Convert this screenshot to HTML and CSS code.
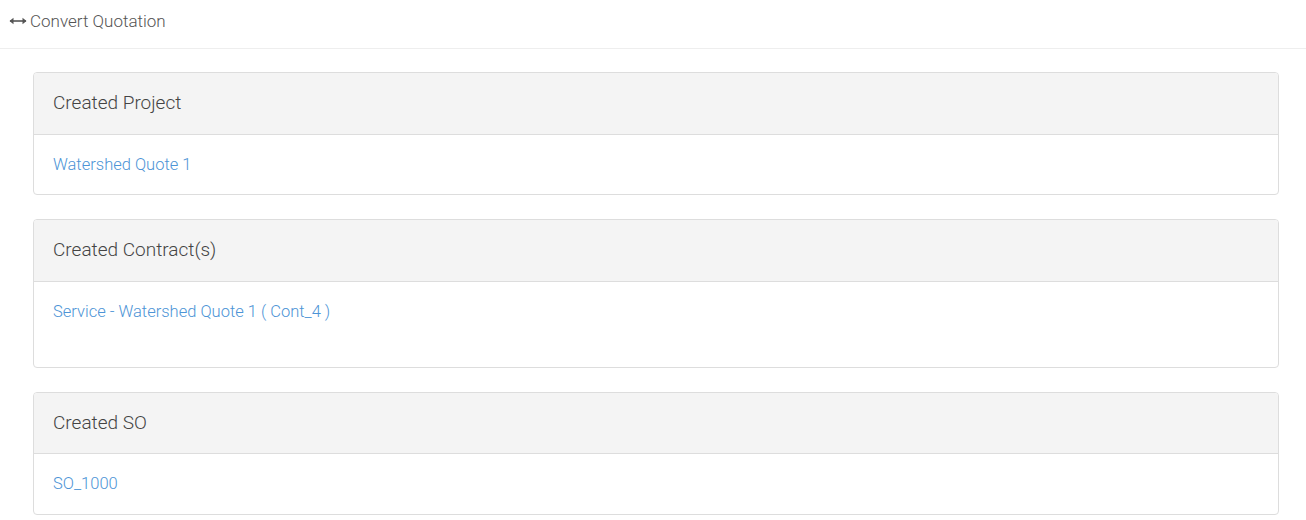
FILE: index.html
```html
<!DOCTYPE html>
<html>
<head>
<meta charset="utf-8">
<link rel="stylesheet" href="styles.css">
</head>
<body>
<div class="topbar">
  <svg class="arrow" width="18" height="8" viewBox="0 0 18 8"><path d="M1 4H17" stroke="#555" stroke-width="1.6"/><path d="M0.5 4L4.5 0.8V7.2Z M17.5 4L13.5 0.8V7.2Z" fill="#555"/></svg>
  <span class="title">Convert Quotation</span>
</div>
<div class="content">
  <div class="panel">
    <div class="panel-heading">Created Project</div>
    <div class="panel-body"><a class="link" href="#">Watershed Quote 1</a></div>
  </div>
  <div class="panel">
    <div class="panel-heading">Created Contract(s)</div>
    <div class="panel-body tall"><a class="link" href="#">Service - Watershed Quote 1 ( Cont_4 )</a></div>
  </div>
  <div class="panel">
    <div class="panel-heading">Created SO</div>
    <div class="panel-body"><a class="link" href="#">SO_1000</a></div>
  </div>
</div>
</body>
</html>
```
FILE: styles.css
```css
html, body { margin: 0; padding: 0; background: #fff; }
body { font-family: Roboto, "Noto Sans", sans-serif; color: #555; }
.topbar {
  height: 49px;
  border-bottom: 1px solid #eee;
  display: flex;
  align-items: center;
  padding-left: 9px;
  box-sizing: border-box;
  gap: 3px;
  padding-bottom: 6px;
}
.arrow { display: block; }
.title { font-size: 17px; font-weight: 300; color: #555; }
.content { padding: 23px 27px 0 33px; }
.panel {
  border: 1px solid #ddd;
  border-radius: 4px;
  margin-bottom: 24px;
  overflow: hidden;
}
.panel-heading {
  background: #f4f4f4;
  border-bottom: 1px solid #ddd;
  padding: 20px 19px 20.5px 19px;
  line-height: 20px;
  font-size: 19px;
  font-weight: 300;
  color: #444;
}
.panel-body {
  padding: 20px 19px 19.5px 19px;
  line-height: 20px;
  font-size: 16.5px;
}
.panel-body.tall { padding-bottom: 45px; }
.link { color: #4d94d6; text-decoration: none; font-weight: 300; }
```
